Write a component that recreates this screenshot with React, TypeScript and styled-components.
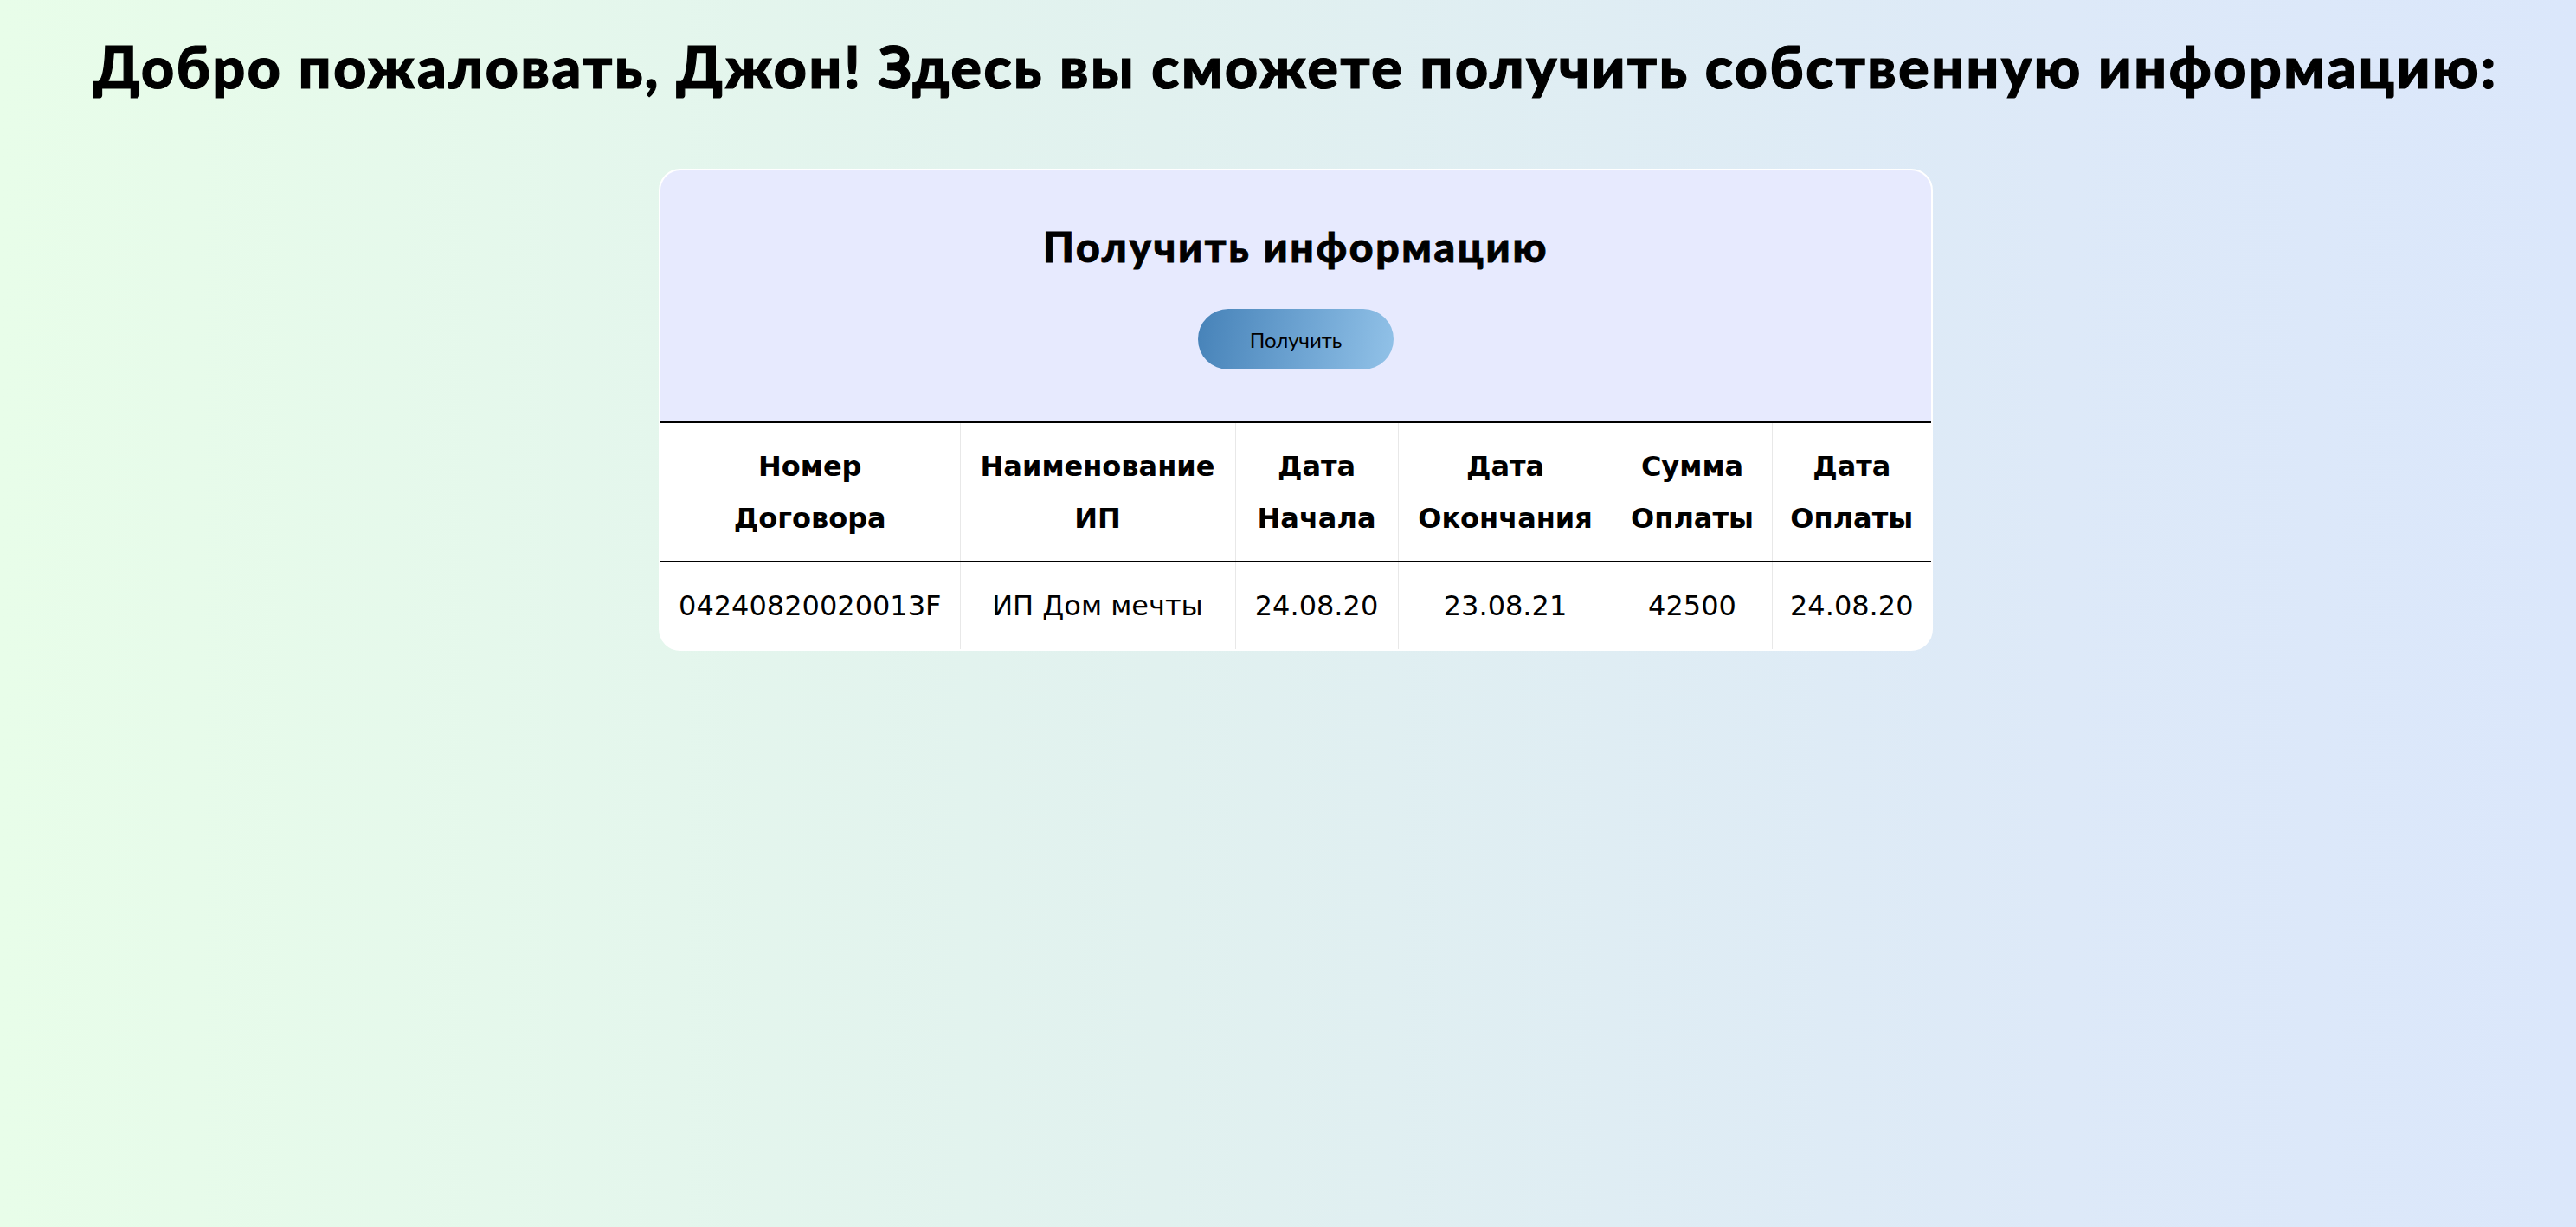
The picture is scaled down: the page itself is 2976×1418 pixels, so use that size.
import React from "react";
import styled, { createGlobalStyle } from "styled-components";

const GlobalStyle = createGlobalStyle`
  html, body { margin: 0; padding: 0; }
  body {
    min-height: 100vh;
    background: linear-gradient(to right, #e8fde9 0%, #e1f1ef 45%, #dde9f8 80%, #dbe7fb 100%);
    font-family: "Lato", "DejaVu Sans", sans-serif;
    color: #000;
  }
`;

const Page = styled.main`
  min-height: 100vh;
  display: flex;
  flex-direction: column;
  align-items: center;
  padding-left: 18px;
  box-sizing: border-box;
`;

const Heading = styled.h1`
  margin: 44px 0 0;
  font-family: "Lato", sans-serif;
  font-weight: 900;
  font-size: 66px;
  line-height: 1;
  letter-spacing: 2.6px;
  -webkit-text-stroke: 1.2px #000;
  text-align: center;
  white-space: nowrap;
`;

const Card = styled.section`
  margin-top: 85px;
  width: 1472px;
  box-sizing: border-box;
  border: 2px solid #ffffff;
  border-radius: 25px;
  overflow: hidden;
  background: #ffffff;
`;

const CardHeader = styled.div`
  background: #e7eafe;
  display: flex;
  flex-direction: column;
  align-items: center;
  padding: 64px 0 60px;
`;

const CardTitle = styled.h2`
  margin: 0;
  font-family: "Lato", sans-serif;
  font-weight: 900;
  font-size: 48px;
  line-height: 1;
  letter-spacing: 2.7px;
  -webkit-text-stroke: 0.9px #000;
  white-space: nowrap;
`;

const FetchButton = styled.button`
  margin-top: 48px;
  width: 226px;
  height: 70px;
  border: none;
  border-radius: 35px;
  background: linear-gradient(100deg, #4682b8 0%, #6fa5d3 55%, #92c2e8 100%);
  font-family: "Lato", sans-serif;
  font-size: 24px;
  color: #000;
  cursor: pointer;
`;

const Table = styled.table`
  width: 100%;
  border-collapse: collapse;
  table-layout: fixed;
  font-family: "DejaVu Sans", "Verdana", sans-serif;
  font-size: 32px;
  line-height: 60px;
  border-top: 2px solid #000;
`;

const Column = styled.col<{ $w: number }>`
  width: ${(p) => p.$w}px;
`;

const HeadRow = styled.tr`
  border-bottom: 2px solid #000;
`;

const Th = styled.th`
  font-weight: 700;
  padding: 20px 0 19px;
  text-align: center;
  border-left: 1px solid #e8e8e8;
  &:first-child { border-left: none; }
`;

const Td = styled.td`
  padding: 20px 0;
  text-align: center;
  border-left: 1px solid #e8e8e8;
  white-space: nowrap;
  &:first-child { border-left: none; }
`;

const cols = [346, 318, 188, 248, 184, 184];
const headers: [string, string][] = [
  ["Номер", "Договора"],
  ["Наименование", "ИП"],
  ["Дата", "Начала"],
  ["Дата", "Окончания"],
  ["Сумма", "Оплаты"],
  ["Дата", "Оплаты"],
];
const row = ["04240820020013F", "ИП Дом мечты", "24.08.20", "23.08.21", "42500", "24.08.20"];

export default function App() {
  return (
    <>
      <GlobalStyle />
      <Page>
        <Heading>Добро пожаловать, Джон! Здесь вы сможете получить собственную информацию:</Heading>
        <Card>
          <CardHeader>
            <CardTitle>Получить информацию</CardTitle>
            <FetchButton>Получить</FetchButton>
          </CardHeader>
          <Table>
            <colgroup>
              {cols.map((w, i) => (
                <Column key={i} $w={w} />
              ))}
            </colgroup>
            <thead>
              <HeadRow>
                {headers.map(([a, c]) => (
                  <Th key={a + c}>
                    {a}
                    <br />
                    {c}
                  </Th>
                ))}
              </HeadRow>
            </thead>
            <tbody>
              <tr>
                {row.map((v, i) => (
                  <Td key={i}>{v}</Td>
                ))}
              </tr>
            </tbody>
          </Table>
        </Card>
      </Page>
    </>
  );
}
